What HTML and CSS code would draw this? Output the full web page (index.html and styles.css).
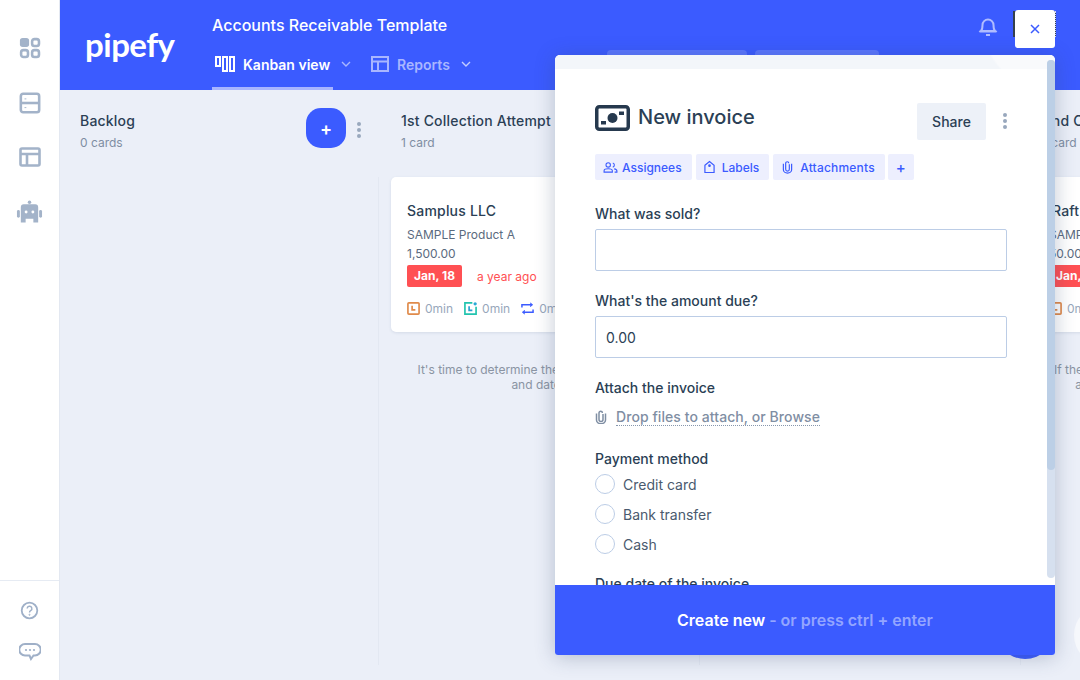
FILE: index.html
```html
<!DOCTYPE html>
<html lang="en">
<head>
    <meta charset="UTF-8">
    <title>Accounts Receivable Template</title>
    <link rel="stylesheet" href="styles.css">
</head>
<body>
    <div class="app">
        <aside class="sidebar">
            <nav class="side-top">
                <svg class="side-icon" viewBox="0 0 24 24"><rect x="1" y="1" width="10" height="10" rx="3" fill="#a3b3c9"/><rect x="14.300" y="2.300" width="7.500" height="7.500" rx="2.500" fill="none" stroke="#a3b3c9" stroke-width="2.800"/><rect x="2.300" y="14.300" width="7.500" height="7.500" rx="2.500" fill="none" stroke="#a3b3c9" stroke-width="2.800"/><rect x="14.300" y="14.300" width="7.500" height="7.500" rx="2.500" fill="none" stroke="#a3b3c9" stroke-width="2.800"/></svg>
                <svg class="side-icon" viewBox="0 0 24 24" fill="none" stroke="#a3b3c9" stroke-width="2.800"><rect x="2" y="2" width="20" height="20" rx="2.500"/><path d="M2 12h20"/><path d="M6 7.500h2M6 17h2" stroke-width="1"/></svg>
                <svg class="side-icon side-icon-short" viewBox="0 0 22 20" fill="none" stroke="#a3b3c9" stroke-width="2.600"><rect x="1.500" y="1.500" width="19" height="17" rx="1.500"/><path d="M1.500 7h19M8 7v11.500"/></svg>
                <svg class="side-icon bot" viewBox="0 0 28 24"><circle cx="14" cy="2" r="1.800" fill="#a3b3c9"/><path d="M5 7a3 3 0 0 1 3-3h12a3 3 0 0 1 3 3v16h-5v-4h-8v4H5z" fill="#a3b3c9"/><rect x="1" y="10" width="3" height="8" rx="1.500" fill="#a3b3c9"/><rect x="24" y="10" width="3" height="8" rx="1.500" fill="#a3b3c9"/><circle cx="10.500" cy="12" r="1.500" fill="#fff"/><circle cx="17.500" cy="12" r="1.500" fill="#fff"/></svg>
            </nav>
            <div class="side-bottom">
                <svg class="help-icon" viewBox="0 0 20 20" fill="none" stroke="#9fb0c8" stroke-width="1.900"><circle cx="10" cy="10" r="8.200"/><path d="M7.500 8a2.500 2.500 0 1 1 3.700 2.200c-.8.500-1.200 1-1.200 1.800" stroke-width="1.500"/><circle cx="10" cy="14.500" r=".6" stroke-width="1"/></svg>
                <svg class="chat-icon" viewBox="0 0 22 20"><path d="M6 2h10a4.500 4.500 0 0 1 0 11.500h-1.500L12 17l-1.500-3.500H6A4.500 4.500 0 0 1 6 2z" fill="none" stroke="#9fb0c8" stroke-width="2"/><circle cx="7" cy="8" r="1.100" fill="#9fb0c8"/><circle cx="11" cy="8" r="1.100" fill="#9fb0c8"/><circle cx="15" cy="8" r="1.100" fill="#9fb0c8"/></svg>
            </div>
        </aside>

        <main class="main">
            <header class="topbar">
                <div class="logo">pipefy</div>
                <div class="pipe-info">
                    <h1 class="pipe-title">Accounts Receivable Template</h1>
                    <div class="tabs">
                        <div class="tab tab-active">
                            <svg class="tab-icon kanban" viewBox="0 0 20 16" fill="none" stroke="#fff" stroke-width="2"><rect x="1" y="1" width="4" height="9"/><rect x="8" y="1" width="4" height="14"/><rect x="15" y="1" width="4" height="14"/></svg>
                            <span>Kanban view</span>
                            <svg class="chev" viewBox="0 0 10 6" fill="none" stroke="#a9b6ff" stroke-width="1.400"><path d="M1 1l4 4 4-4"/></svg>
                        </div>
                        <div class="tab tab-dim">
                            <svg class="tab-icon" viewBox="0 0 18 16" fill="none" stroke="#a9b6ff" stroke-width="2"><rect x="1" y="1" width="16" height="14"/><path d="M1 5.500h16M7 5.500V15"/></svg>
                            <span>Reports</span>
                            <svg class="chev" viewBox="0 0 10 6" fill="none" stroke="#c3ccff" stroke-width="1.400"><path d="M1 1l4 4 4-4"/></svg>
                        </div>
                    </div>
                </div>
                <div class="top-actions">
                    <div class="top-btn top-btn-one"></div>
                    <div class="top-btn top-btn-two"></div>
                    <svg class="bell" viewBox="0 0 20 22" fill="none" stroke="#b0bcff" stroke-width="2"><path d="M3 16c1.300-1.300 1.500-3 1.500-6a5.500 5.500 0 0 1 11 0c0 3 .2 4.700 1.500 6z"/><path d="M1.500 16.500h17M8 20h4"/></svg>
                    <div class="avatar"></div>
                </div>
            </header>

            <section class="board">
                <div class="column column-first">
                    <div class="col-head">
                        <div>
                            <h2 class="col-title">Backlog</h2>
                            <p class="col-count">0 cards</p>
                        </div>
                        <div class="col-actions">
                            <button class="add-btn">+</button>
                            <span class="kebab"><i></i><i></i><i></i></span>
                        </div>
                    </div>
                </div>

                <div class="column">
                    <div class="col-head col-head-card">
                        <div>
                            <h2 class="col-title">1st Collection Attempt</h2>
                            <p class="col-count">1 card</p>
                        </div>
                    </div>
                    <article class="card">
                        <h3 class="card-title">Samplus LLC</h3>
                        <p class="card-line">SAMPLE Product A</p>
                        <p class="card-line">1,500.00</p>
                        <div class="card-due">
                            <span class="due-tag">Jan, 18</span>
                            <span class="due-text">a year ago</span>
                        </div>
                        <div class="card-times">
                            <span class="time"><svg class="time-icon" viewBox="0 0 14 14" fill="none" stroke="#e08a4a" stroke-width="1.800"><rect x="1" y="1" width="12" height="12" rx="1"/><path d="M5.500 4v4.500H9"/></svg>0min</span>
                            <span class="time"><svg class="time-icon" viewBox="0 0 14 14" fill="none" stroke="#21c4ae" stroke-width="1.800"><path d="M9 1H1v12h12V5"/><path d="M5.500 4.500v4.500H9" stroke="#2a9fd0"/><circle cx="12" cy="2" r="1.800" fill="#2aa9d6" stroke="none"/></svg>0min</span>
                            <span class="time"><svg class="time-icon" viewBox="0 0 14 14" fill="none" stroke="#3b5bff" stroke-width="1.600"><path d="M1 6V3h10M13 8v3H3"/><path d="M10 1l2.500 2L10 5M4 9l-2.500 2L4 13" fill="#3b5bff" stroke-width="1"/></svg>0min</span>
                        </div>
                    </article>
                    <p class="col-hint">It's time to determine the payment methods<br>and dates.</p>
                </div>

                <div class="column"></div>

                <div class="column">
                    <div class="col-head col-head-card">
                        <div>
                            <h2 class="col-title">2nd Collection Attempt</h2>
                            <p class="col-count">1 card</p>
                        </div>
                    </div>
                    <article class="card">
                        <h3 class="card-title card-title-inset">Raft Ltd</h3>
                        <p class="card-line">SAMPLE Product</p>
                        <p class="card-line">50.00</p>
                        <div class="card-due">
                            <span class="due-tag">Jan, 18</span>
                        </div>
                        <div class="card-times">
                            <span class="time"><svg class="time-icon" viewBox="0 0 14 14" fill="none" stroke="#e08a4a" stroke-width="1.800"><rect x="1" y="1" width="12" height="12" rx="1"/><path d="M5.500 4v4.500H9"/></svg>0min</span>
                        </div>
                    </article>
                    <p class="col-hint">If the client has still not paid, do send another<br>attempt to collect the invoice amounts</p>
                </div>
            </section>
        </main>

        <div class="fab"></div>
        <div class="fab-white"></div>

        <button class="close-btn">
            <svg class="close-icon" viewBox="0 0 10 10" fill="none" stroke="#3b5bff" stroke-width="1.500"><path d="M1 1l8 8M9 1l-8 8"/></svg>
        </button>

        <div class="modal">
            <div class="modal-band"></div>
            <div class="modal-body">
                <div class="modal-head">
                    <svg class="invoice-icon" viewBox="0 0 35 26"><rect x="1.750" y="1.750" width="31.500" height="22.500" rx="2.500" fill="none" stroke="#26394e" stroke-width="3.500"/><circle cx="17.500" cy="13" r="5" fill="#26394e"/><rect x="6" y="16" width="5" height="3.500" fill="#26394e"/><rect x="24" y="6.500" width="5" height="3.500" fill="#26394e"/></svg>
                    <h2 class="modal-title">New invoice</h2>
                    <button class="share-btn">Share</button>
                    <span class="kebab kebab-modal"><i></i><i></i><i></i></span>
                </div>

                <div class="pills">
                    <span class="pill"><svg class="pill-icon wide" viewBox="0 0 16 12" fill="none" stroke="#3b5bff" stroke-width="1.200"><circle cx="5.500" cy="3.200" r="2.400"/><path d="M1 11V9.500c0-1.400 1.400-2.200 4.500-2.200S10 8.100 10 9.500V11z"/><path d="M10.500 1a2.400 2.400 0 0 1 0 4.600M12 7.500c1.800.3 3 1 3 2.200V11h-2.500"/></svg>Assignees</span>
                    <span class="pill"><svg class="pill-icon" viewBox="0 0 12 14" fill="none" stroke="#3b5bff" stroke-width="1.300"><path d="M1 5l5-4 5 4v8H1z"/><circle cx="6" cy="5.500" r=".8" fill="#3b5bff"/></svg>Labels</span>
                    <span class="pill pill-attach"><svg class="pill-icon" viewBox="0 0 12 14" fill="none" stroke="#3b5bff" stroke-width="1.300"><path d="M8 4v5.500a2 2 0 0 1-4 0V3a1.700 1.700 0 0 1 3.400 0"/><path d="M10.500 3.500V10a4.300 3.500 0 0 1-9 0V3.500"/></svg>Attachments</span>
                    <span class="pill pill-plus">+</span>
                </div>

                <label class="field-label">What was sold?</label>
                <div class="text-input"></div>

                <label class="field-label field-label-next">What's the amount due?</label>
                <div class="text-input">0.00</div>

                <label class="field-label field-label-next">Attach the invoice</label>
                <div class="attach">
                    <svg class="attach-icon" viewBox="0 0 12 14" fill="none" stroke="#7f8ea3" stroke-width="1.500"><path d="M8 4v5.500a2 2 0 0 1-4 0V3a1.700 1.700 0 0 1 3.400 0"/><path d="M10.500 3.500V10a4.300 3.500 0 0 1-9 0V3.500"/></svg>
                    <span class="attach-text">Drop files to attach, or Browse</span>
                </div>

                <label class="field-label field-label-tight">Payment method</label>
                <div class="radio"><span class="radio-dot"></span>Credit card</div>
                <div class="radio"><span class="radio-dot"></span>Bank transfer</div>
                <div class="radio"><span class="radio-dot"></span>Cash</div>

                <label class="field-label field-label-due">Due date of the invoice</label>
            </div>
            <div class="modal-foot"><strong>Create new</strong><span class="foot-hint"> - or press ctrl + enter</span></div>
            <div class="scroll-track"><div class="scroll-thumb"></div></div>
        </div>
    </div>
</body>
</html>
```

FILE: styles.css
```css
:root {
    --primary: #3b5bff;
    --board-bg: #ebeff8;
    --text-dark: #2b3f55;
    --text-grey: #7f8ea3;
    --border: #bccde6;
}

* {
    margin: 0;
    padding: 0;
    box-sizing: border-box;
}

body {
    font-family: 'Inter', 'Liberation Sans', sans-serif;
    color: var(--text-dark);
    background: var(--board-bg);
    overflow: hidden;
}

.app {
    position: relative;
    display: flex;
    width: 1080px;
    height: 680px;
    overflow: hidden;
}

/* sidebar */
.sidebar {
    width: 60px;
    flex-shrink: 0;
    background: #fff;
    border-right: 1px solid #e3e8f1;
    display: flex;
    flex-direction: column;
    justify-content: space-between;
}

.side-top {
    display: flex;
    flex-direction: column;
    align-items: center;
    gap: 33px;
    padding-top: 37px;
}

.side-icon {
    display: block;
    width: 22px;
    height: 22px;
}

.side-icon-short {
    height: 20px;
}

.side-icon.bot {
    width: 27px;
    height: 24px;
}

.side-bottom {
    height: 100px;
    border-top: 1px solid #e6ebf3;
    display: flex;
    flex-direction: column;
    align-items: center;
    padding-top: 20px;
}

.help-icon {
    width: 19px;
    height: 19px;
}

.chat-icon {
    width: 22px;
    height: 20px;
    margin-top: 22px;
}

/* top bar */
.main {
    flex: 1;
    min-width: 0;
    display: flex;
    flex-direction: column;
}

.topbar {
    position: relative;
    height: 90px;
    flex-shrink: 0;
    background: var(--primary);
    display: flex;
    color: #fff;
}

.logo {
    width: 152px;
    padding: 24px 0 0 25px;
    font-family: 'Lato', sans-serif;
    font-size: 33px;
    font-weight: 700;
    letter-spacing: -0.5px;
    line-height: 40px;
}

.pipe-info {
    width: 395px;
    flex-shrink: 0;
}

.pipe-title {
    font-size: 16px;
    font-weight: 500;
    line-height: 20px;
    padding-top: 15px;
}

.tabs {
    display: flex;
    gap: 35px;
    margin-top: 10px;
}

.tab {
    display: flex;
    align-items: center;
    height: 45px;
    padding: 0 3px 7px;
    font-size: 14px;
    font-weight: 600;
    white-space: nowrap;
}

.tab-active {
    width: 121px;
    border-bottom: 3px solid #a8b5ff;
    padding-bottom: 4px;
}

.tab-dim {
    color: #a9b6ff;
}

.tab-icon {
    width: 18px;
    height: 16px;
    margin-right: 8px;
    flex-shrink: 0;
}

.kanban {
    width: 20px;
    margin-right: 8px;
}

.chev {
    width: 10px;
    height: 6px;
    margin-left: 11px;
    flex-shrink: 0;
}

.top-actions {
    flex: 1;
    position: relative;
}

.top-btn {
    position: absolute;
    top: 50px;
    height: 10px;
    background: #5a76ff;
    border-radius: 4px 4px 0 0;
}

.top-btn-one {
    left: 0;
    width: 140px;
}

.top-btn-two {
    left: 148px;
    width: 124px;
}

.bell {
    position: absolute;
    top: 15px;
    left: 371px;
    width: 20px;
    height: 22px;
}

.avatar {
    position: absolute;
    top: 11px;
    left: 406px;
    width: 43px;
    height: 26px;
    background: #34404e;
    border-right: 1px dotted #c8d0ff;
}

/* board */
.board {
    flex: 1;
    display: flex;
    overflow: hidden;
    background: var(--board-bg);
}

.column {
    width: 321px;
    flex-shrink: 0;
    padding: 0 10px 0 12px;
    margin-bottom: 15px;
    position: relative;
}

.column::before {
    content: '';
    position: absolute;
    left: -1px;
    top: 87px;
    bottom: 0;
    width: 1px;
    background: #e3e8f2;
}

.column-first {
    width: 319px;
    padding-left: 20px;
    padding-right: 0;
}

.column-first::before {
    display: none;
}

.col-head {
    display: flex;
    justify-content: space-between;
    height: 87px;
    padding-top: 22px;
}

.col-head-card {
    padding-left: 10px;
}

.col-title {
    font-size: 14px;
    font-weight: 500;
    line-height: 18px;
    letter-spacing: 0.2px;
    white-space: nowrap;
}

.col-count {
    font-size: 12px;
    line-height: 16px;
    margin-top: 5px;
    color: var(--text-grey);
}

.col-actions {
    display: flex;
    align-items: flex-start;
    margin-top: -4px;
    margin-right: 18px;
}

.add-btn {
    width: 40px;
    height: 40px;
    border: 0;
    border-radius: 15px;
    background: var(--primary);
    color: #fff;
    font-family: inherit;
    font-size: 18px;
    font-weight: 600;
}

.kebab {
    display: flex;
    flex-direction: column;
    gap: 2px;
    margin-left: 11px;
    margin-top: 14px;
}

.kebab i {
    display: block;
    width: 4px;
    height: 4px;
    border-radius: 50%;
    background: #99a8bd;
}

.card {
    background: #fff;
    border-radius: 5px;
    height: 155px;
    width: 300px;
    padding: 24px 16px 0;
    box-shadow: 0 1px 3px rgba(60, 80, 120, 0.12);
    overflow: hidden;
    white-space: nowrap;
}

.card-title {
    font-size: 14px;
    font-weight: 500;
    line-height: 20px;
    letter-spacing: 0.2px;
}

.card-title-inset {
    padding-left: 3px;
}

.card-line {
    font-size: 12px;
    line-height: 19px;
    color: #5a6a7e;
}

.card-line:first-of-type {
    margin-top: 4px;
}

.card-due {
    display: flex;
    align-items: center;
    margin-top: 2px;
}

.due-tag {
    width: 55px;
    height: 22px;
    line-height: 22px;
    text-align: center;
    background: #ff5053;
    color: #fff;
    border-radius: 2px;
    font-size: 12px;
    font-weight: 700;
}

.due-text {
    margin-left: 15px;
    font-size: 12px;
    color: #ff5053;
}

.card-times {
    display: flex;
    gap: 11px;
    margin-top: 14px;
}

.time {
    display: flex;
    align-items: center;
    gap: 5px;
    font-size: 12px;
    color: #98a7bb;
}

.time-icon {
    width: 13px;
    height: 13px;
}

.col-hint {
    width: 300px;
    margin-top: 30px;
    text-align: center;
    font-size: 12px;
    line-height: 15px;
    white-space: nowrap;
    color: #8a94a3;
}

.fab {
    position: absolute;
    left: 995px;
    top: 599px;
    width: 60px;
    height: 60px;
    border-radius: 50%;
    background: var(--primary);
}

.fab-white {
    position: absolute;
    left: 1074px;
    top: 605px;
    width: 60px;
    height: 60px;
    border-radius: 50%;
    background: #f6f8fc;
}

/* modal */
.close-btn {
    position: absolute;
    top: 10px;
    left: 1015px;
    width: 40px;
    height: 38px;
    border: 0;
    border-radius: 3px;
    background: #fff;
    z-index: 3;
    display: flex;
    align-items: center;
    justify-content: center;
}

.close-icon {
    width: 10px;
    height: 10px;
}

.modal {
    position: absolute;
    left: 555px;
    top: 55px;
    width: 500px;
    height: 600px;
    border-radius: 5px 5px 3px 3px;
    background: #fff;
    box-shadow: 0 2px 20px rgba(50, 70, 110, 0.3);
    display: flex;
    flex-direction: column;
    overflow: hidden;
    z-index: 2;
}

.modal-band {
    height: 14px;
    flex-shrink: 0;
    background: radial-gradient(circle at 485px -25px, #f9fafc 54px, #f3f6fa 56px);
}

.modal-body {
    flex: 1;
    min-height: 0;
    overflow: hidden;
    padding: 34px 48px 0 40px;
}

.modal-head {
    display: flex;
    align-items: center;
    height: 37px;
}

.invoice-icon {
    width: 35px;
    height: 26px;
    margin-right: 8px;
    margin-top: -7px;
}

.modal-title {
    flex: 1;
    font-size: 20px;
    font-weight: 500;
    margin-top: -9px;
}

.share-btn {
    width: 69px;
    height: 37px;
    border: 0;
    border-radius: 2px;
    background: #edf1f8;
    color: var(--text-dark);
    font-family: inherit;
    font-size: 14px;
    font-weight: 500;
}

.kebab-modal {
    gap: 2px;
    margin: -2px 0 0 17px;
    width: 4px;
}

.pills {
    display: flex;
    gap: 4px;
    margin-top: 14px;
}

.pill {
    display: flex;
    align-items: center;
    height: 26px;
    padding: 0 10px 0 8px;
    border-radius: 2px;
    background: #edeffe;
    color: var(--primary);
    font-size: 12px;
    font-weight: 500;
}

.pill-attach {
    padding-left: 9px;
    letter-spacing: 0.2px;
}

.pill-plus {
    width: 26px;
    margin-left: -1px;
    padding: 0;
    justify-content: center;
    font-size: 15px;
}

.pill-icon {
    width: 11px;
    height: 14px;
    margin-right: 7px;
}

.pill-icon.wide {
    width: 15px;
    height: 11px;
    margin-right: 4px;
}

.field-label {
    display: block;
    font-size: 14px;
    font-weight: 500;
    line-height: 18px;
    margin-top: 25px;
    color: var(--text-dark);
}

.field-label-next {
    margin-top: 21px;
}

.field-label-tight {
    margin-top: 24px;
    margin-bottom: 1px;
}

.field-label-due {
    margin-top: 16px;
}

.text-input {
    width: 412px;
    height: 42px;
    margin-top: 6px;
    padding: 0 10px;
    line-height: 42px;
    border: 1px solid var(--border);
    border-radius: 2px;
    font-size: 14px;
}

.attach {
    display: flex;
    align-items: center;
    margin-top: 11px;
    height: 18px;
}

.attach-icon {
    width: 12px;
    height: 14px;
    margin-right: 9px;
}

.attach-text {
    font-size: 14px;
    font-weight: 500;
    letter-spacing: 0.07px;
    color: var(--text-grey);
    border-bottom: 1px dotted #8797ad;
    line-height: 17px;
}

.radio {
    display: flex;
    align-items: center;
    height: 30px;
    font-size: 14px;
    color: #4a5a6e;
}

.radio-dot {
    width: 20px;
    height: 20px;
    margin-right: 8px;
    border: 1px solid var(--border);
    border-radius: 50%;
}

.modal-foot {
    height: 70px;
    flex-shrink: 0;
    background: var(--primary);
    color: #fff;
    text-align: center;
    line-height: 70px;
    font-size: 16px;
}

.modal-foot strong {
    font-weight: 600;
}

.foot-hint {
    color: #93a5ff;
    font-weight: 600;
}

.scroll-track {
    position: absolute;
    top: 5px;
    right: 0;
    width: 8px;
    height: 518px;
    background: #d6e0ef;
    border-radius: 4px;
}

.scroll-thumb {
    height: 410px;
    background: #bccfe6;
    border-radius: 4px;
}
```
